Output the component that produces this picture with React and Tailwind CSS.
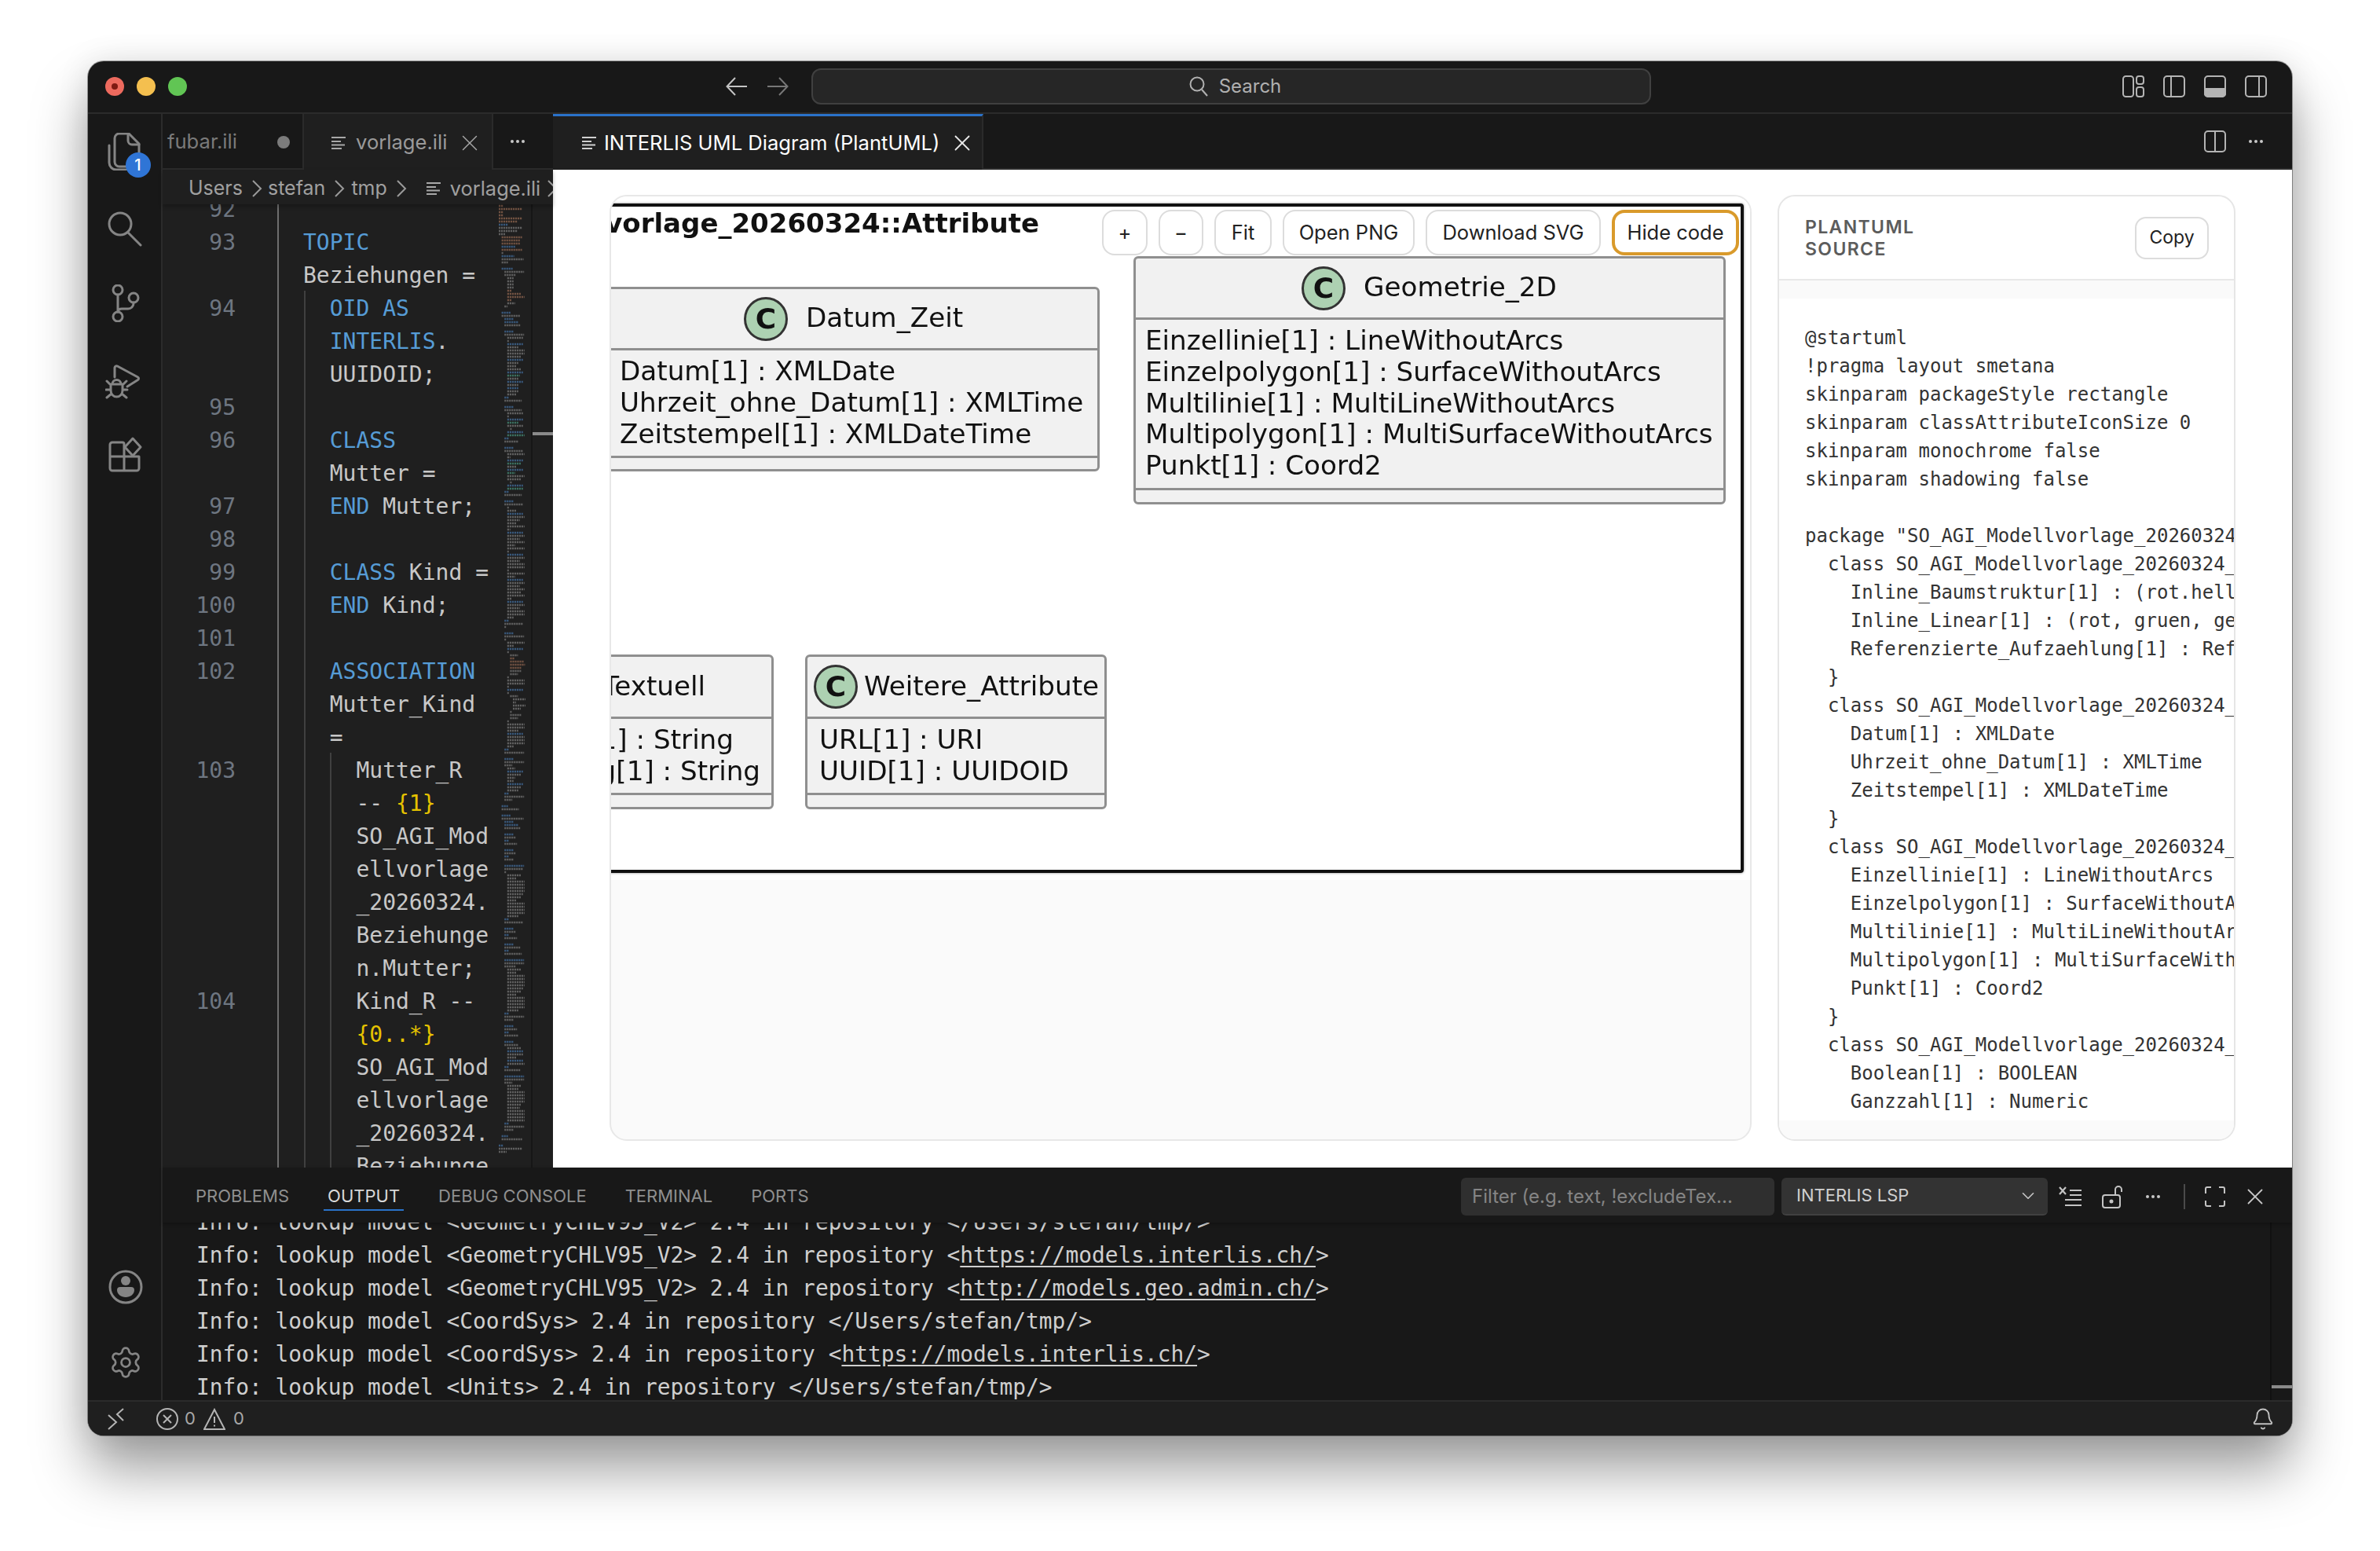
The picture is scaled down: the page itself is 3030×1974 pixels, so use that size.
import React from "react";
import { Settings, Bell, X, ChevronDown } from "lucide-react";

const MA = "3b20";
const GEO = "3g24 3g16";
// one token per minimap row: indent level, colour, width in px ("-" is an empty row)
const minimapRows = `0o6 0o30 0o6 0o6 0o30 0o24 0b12 0g30 0g24 0g8 1o26 1o24 1o24 1b18 1o26 1g2 1b16 1g30 1g8 - 1b14 2g28 2g14 3g8 3g8 3g8 3g8 3o6 3o18 3o30 3o6 3g10 2g4 -
1b12 1g24 2b12 2b18 2g20 - 2b12 2g26 3g20 3g2 ${MA} 3g14 3g22 3g22 3g18 ${MA} 3g14 3g12 3g18 ${MA} 3t16 3g14 ${MA} 3g14 3b14 3g14 3g12 2b6 2g22 - 2b12 2g22 3g20 3g2 ${MA} 3t14 3g20 4g2 ${MA} 3t22 2b6 2g18 -
2b12 2g24 3g22 3g4 ${MA} 3t18 3g12 ${MA} 3t10 3g22 3g18 4g2 ${MA} 3t20 2b6 2g22 - 2b12 2g24 3g2 3g12 ${MA} ${GEO} 3g12 3g22 3g4 ${MA} ${GEO} 3g24 3g10 3g22 3g2 ${MA} ${GEO} 3g24 3g22 3g2 3g22 3g10 ${MA} ${GEO} 3g24 3g18 3g22 3g6 ${MA} ${GEO} 3g24 3g24 3g8 2b6 2g24 2g2 -
2b12 2g26 2g2 3g22 3g8 ${MA} 3g2 4g10 4o6 4o18 4o24 4o14 4g14 4g10 3g2 3g22 3g22 3g2 ${MA} 3g2 4g10 5g16 5g4 5g16 5g10 4g2 4g14 4g10 3g2 3g22 3g22 3g14 ${MA} 3g24 3g22 3g24 3g8 2b6 2g28 -
2b12 2g26 2g10 3g10 ${MA} 3g18 3g10 3g8 ${MA} 3g18 3g14 2b6 2g26 2g10 - 1b8 1g22 - 1b12 1g28 2b12 2b18 2g20 - 2b12 2g14 2b6 2g16 - 2b12 2g14 2b6 2g12 - 2b26 2g24 2g2 3g18 3g12 3g24 3g24 3g24 3g26 3g20 3g18 3g12 3g24 3g24 3g24 3g26 3g14 2b6 2g24 - 2b12 2g14 2b6 2g16 - 2b12 2g20 2b6 2g22 - 2b26 2g28 2g14 3g18 3g12 3g24 3g24 3g24 3g26 3g20 3g18 3g12 3g24 3g24 3g24 3g26 3g14 2b6 2g28 2g12 -
2b12 2g16 2b6 2g18 - 2b12 2g18 3g18 ${MA} 3g20 3g12 ${MA} 3g22 2b6 2g20 - 2b26 2g28 2g10 3g18 3g14 3g24 3g24 3g24 3g26 3g18 3g16 3g24 3g24 3g24 3g22 2b6 2g28 2g12 - 1b8 1g26 - 0b6 0g30 0g10 -`
  .split(/\s+/);

const minimapColors = { b: "#4a7fb8", g: "#8b8b8b", o: "#a8755a", t: "#4fa58a" };

const codeRows = [
  [92],
  [93, [["b", "TOPIC"]]],
  [null, [["", "Beziehungen ="]]],
  [94, [["b", "  OID AS"]]],
  [null, [["b", "  INTERLIS"], ["", "."]]],
  [null, [["", "  UUIDOID;"]]],
  [95],
  [96, [["b", "  CLASS"]]],
  [null, [["", "  Mutter ="]]],
  [97, [["b", "  END"], ["", " Mutter;"]]],
  [98],
  [99, [["b", "  CLASS"], ["", " Kind ="]]],
  [100, [["b", "  END"], ["", " Kind;"]]],
  [101],
  [102, [["b", "  ASSOCIATION"]]],
  [null, [["", "  Mutter_Kind"]]],
  [null, [["", "  ="]]],
  [103, [["", "    Mutter_R"]]],
  [null, [["", "    -- "], ["y", "{1}"]]],
  [null, [["", "    SO_AGI_Mod"]]],
  [null, [["", "    ellvorlage"]]],
  [null, [["", "    _20260324."]]],
  [null, [["", "    Beziehunge"]]],
  [null, [["", "    n.Mutter;"]]],
  [104, [["", "    Kind_R --"]]],
  [null, [["y", "    {0..*}"]]],
  [null, [["", "    SO_AGI_Mod"]]],
  [null, [["", "    ellvorlage"]]],
  [null, [["", "    _20260324."]]],
  [null, [["", "    Beziehunge"]]],
];

const sourceLines = [
  "@startuml",
  "!pragma layout smetana",
  "skinparam packageStyle rectangle",
  "skinparam classAttributeIconSize 0",
  "skinparam monochrome false",
  "skinparam shadowing false",
  "",
  'package "SO_AGI_Modellvorlage_20260324::Attribute" as SO_AGI {',
  "  class SO_AGI_Modellvorlage_20260324_Attribute_Aufzaehlung {",
  "    Inline_Baumstruktur[1] : (rot.hellrot, rot.dunkelrot, gruen, gelb)",
  "    Inline_Linear[1] : (rot, gruen, gelb)",
  "    Referenzierte_Aufzaehlung[1] : Referenziert_Typ",
  "  }",
  "  class SO_AGI_Modellvorlage_20260324_Attribute_Datum_Zeit {",
  "    Datum[1] : XMLDate",
  "    Uhrzeit_ohne_Datum[1] : XMLTime",
  "    Zeitstempel[1] : XMLDateTime",
  "  }",
  "  class SO_AGI_Modellvorlage_20260324_Attribute_Geometrie_2D {",
  "    Einzellinie[1] : LineWithoutArcs",
  "    Einzelpolygon[1] : SurfaceWithoutArcs",
  "    Multilinie[1] : MultiLineWithoutArcs",
  "    Multipolygon[1] : MultiSurfaceWithoutArcs",
  "    Punkt[1] : Coord2",
  "  }",
  "  class SO_AGI_Modellvorlage_20260324_Attribute_Numerisch {",
  "    Boolean[1] : BOOLEAN",
  "    Ganzzahl[1] : Numeric",
  "    Zahl[1] : Numeric",
];

const outputRows = [
  ["Info: lookup model <GeometryCHLV95_V2> 2.4 in repository </Users/stefan/tmp/>"],
  ["Info: lookup model <GeometryCHLV95_V2> 2.4 in repository <", "https://models.interlis.ch/", ">"],
  ["Info: lookup model <GeometryCHLV95_V2> 2.4 in repository <", "http://models.geo.admin.ch/", ">"],
  ["Info: lookup model <CoordSys> 2.4 in repository </Users/stefan/tmp/>"],
  ["Info: lookup model <CoordSys> 2.4 in repository <", "https://models.interlis.ch/", ">"],
  ["Info: lookup model <Units> 2.4 in repository </Users/stefan/tmp/>"],
];

function FileLines({ color = "#a8a8a8" }) {
  return (
    <svg width="18" height="16" viewBox="0 0 18 16" fill="none" stroke={color} strokeWidth="2">
      <path d="M0 1h18M0 6h12M0 10.5h17M0 15h13" />
    </svg>
  );
}

function Crumb() {
  return (
    <svg width="14" height="22" viewBox="0 0 14 22" fill="none" stroke="#9a9a9a" strokeWidth="2" className="shrink-0">
      <path d="M2 1l10 10L2 21" />
    </svg>
  );
}

function Dots({ color = "#c8c8c8" }) {
  return (
    <svg width="20" height="6" viewBox="0 0 20 6" fill={color}>
      <circle cx="3" cy="3" r="2" />
      <circle cx="10" cy="3" r="2" />
      <circle cx="17" cy="3" r="2" />
    </svg>
  );
}

function ActivityIcon({ children, className }) {
  return (
    <svg
      width="48"
      height="48"
      viewBox="0 0 48 48"
      fill="none"
      stroke="#858585"
      strokeWidth="3"
      strokeLinecap="round"
      strokeLinejoin="round"
      className={className}
    >
      {children}
    </svg>
  );
}

function TitleIcon({ children }) {
  return (
    <svg width="28" height="28" viewBox="0 0 28 28" fill="none" stroke="#b4b4b4" strokeWidth="2">
      {children}
    </svg>
  );
}

function UmlBox({ className, headClass, titleClass, bodyClass, title, circle = true, attrs }) {
  return (
    <div className={`absolute flex flex-col rounded-[6px] border-[3px] border-[#8f8f8f] bg-[#f1f1f1] font-['DejaVu_Sans',sans-serif] text-[#111] blur-[0.5px] ${className}`}>
      <div className={`flex items-center border-b-[3px] border-[#8f8f8f] ${headClass}`}>
        {circle && (
          <span className="flex h-[56px] w-[56px] shrink-0 items-center justify-center rounded-full border-[3px] border-[#333] bg-[#add1b2] text-[36px] font-bold leading-none">
            C
          </span>
        )}
        <span className={`whitespace-nowrap pb-[2px] text-[34.2px] leading-none ${titleClass}`}>{title}</span>
      </div>
      <div className={`border-b-[3px] border-[#8f8f8f] ${bodyClass}`}>{attrs}</div>
    </div>
  );
}

function Attr({ children, className = "" }) {
  return <div className={`h-[39.8px] whitespace-nowrap text-[34.2px] leading-[39.8px] ${className}`}>{children}</div>;
}

function DiagramButton({ children, className }) {
  return (
    <button className={`flex h-[58px] items-center justify-center rounded-[16px] bg-white text-[25.5px] text-[#222] ${className}`}>
      {children}
    </button>
  );
}

export default function App() {
  return (
    <div className="h-[1974px] w-[3030px] overflow-hidden bg-white pl-[112px] pt-[78px] font-['Inter',sans-serif]">
      <div className="flex h-[1749px] w-[2806px] flex-col overflow-hidden rounded-[20px] bg-[#181818] shadow-[0_0_0_1px_rgba(0,0,0,0.35),0_44px_70px_rgba(0,0,0,0.38),0_0_40px_rgba(0,0,0,0.1)]">
        {/* Title bar */}
        <div className="flex h-[67px] shrink-0 items-center border-b-2 border-[#2b2b2b] pb-[2px]">
          <div className="ml-[22px] flex gap-[16px]">
            <span className="flex h-[24px] w-[24px] items-center justify-center rounded-full bg-[#ed6a5e]">
              <span className="h-[8px] w-[8px] rounded-full bg-[#7e1a12]" />
            </span>
            <span className="h-[24px] w-[24px] rounded-full bg-[#f4bf4f]" />
            <span className="h-[24px] w-[24px] rounded-full bg-[#61c554]" />
          </div>
          <svg width="28" height="24" viewBox="0 0 28 24" fill="none" stroke="#c4c4c4" strokeWidth="2" className="ml-[686px]">
            <path d="M27 12H2M12 1L1.5 12L12 23" />
          </svg>
          <svg width="28" height="24" viewBox="0 0 28 24" fill="none" stroke="#777" strokeWidth="2" className="ml-[24px]">
            <path d="M1 12h25M16 1l10.5 11L16 23" />
          </svg>
          <div className="ml-[29px] flex h-[46px] w-[1069px] items-center justify-center gap-[14px] rounded-[12px] border-2 border-[#404040] bg-[#262626] pl-[10px] text-[24px] text-[#b0b0b0]">
            <svg width="24" height="26" viewBox="0 0 24 26" fill="none" stroke="#b0b0b0" strokeWidth="2">
              <ellipse cx="10" cy="10" rx="8.5" ry="8.5" />
              <path d="M16 17l7 8" />
            </svg>
            Search
          </div>
          <div className="ml-[600px] flex gap-[24px]">
            <TitleIcon>
              <rect x="1" y="1" width="13" height="26" rx="3.5" />
              <rect x="18" y="1" width="9" height="10" rx="3" />
              <rect x="18" y="15" width="9" height="12" rx="3" />
            </TitleIcon>
            <TitleIcon>
              <rect x="1" y="1" width="26" height="26" rx="4" />
              <path d="M10 1v26" />
            </TitleIcon>
            <TitleIcon>
              <rect x="1" y="1" width="26" height="26" rx="4" />
              <path d="M1 17h26v6a4 4 0 0 1-4 4H5a4 4 0 0 1-4-4z" fill="#b4b4b4" />
            </TitleIcon>
            <TitleIcon>
              <rect x="1" y="1" width="26" height="26" rx="4" />
              <path d="M18 1v26" />
            </TitleIcon>
          </div>
        </div>

        <div className="flex min-h-0 flex-1">
          {/* Activity bar */}
          <div className="flex w-[95px] shrink-0 flex-col items-center border-r-2 border-[#2b2b2b] pr-[2px] pt-[24px]">
            <div className="relative h-[48px] w-[48px]">
              <ActivityIcon>
                <path d="M12 7a6 6 0 0 1 6-6h12l13 13v23a6 6 0 0 1-6 6H18a6 6 0 0 1-6-6z" />
                <path d="M29 1v9a5 5 0 0 0 5 5h9" />
                <path d="M5 16v22a9 9 0 0 0 9 9h18" />
              </ActivityIcon>
              <span className="absolute left-[26px] top-[25px] flex h-[32px] w-[32px] items-center justify-center rounded-full bg-[#2f75d6] text-[20px] font-medium text-white">
                1
              </span>
            </div>
            <ActivityIcon className="mt-[49px]">
              <circle cx="19" cy="19" r="14" />
              <path d="M29 30l16 16" />
            </ActivityIcon>
            <ActivityIcon className="mt-[48px]">
              <circle cx="16" cy="7" r="6" />
              <circle cx="16" cy="41" r="6" />
              <circle cx="36" cy="17" r="6" />
              <path d="M16 13v22M36 23v1a7 7 0 0 1-7 7h-8a5 5 0 0 0-5 4" />
            </ActivityIcon>
            <ActivityIcon className="mt-[51px]">
              <path d="M12 19V7a2.5 2.5 0 0 1 3.5-2L41.5 19a2 2 0 0 1 0 3.5L28 31" />
              <path d="M9 28a5.500 5.500 0 0 1 11 0M7 28h15v8a7.500 8 0 0 1-15 0zM2 24l5 5M27 24l-5 5M1 35h6M28 35h-6M2 45l6-5M27 45l-6-5" />
            </ActivityIcon>
            <ActivityIcon className="mt-[46px]">
              <path d="M24 26V10a2 2 0 0 0-2-2H9a3 3 0 0 0-3 3v30a3 3 0 0 0 3 3h31a3 3 0 0 0 3-3V26H6M24 26v18" />
              <path d="M35 3l10 11-10 11-10-11z" />
            </ActivityIcon>
            <svg width="44" height="44" viewBox="0 0 44 44" fill="none" className="ml-[4px] mt-auto">
              <circle cx="22" cy="22" r="20" stroke="#858585" strokeWidth="3" />
              <circle cx="22" cy="14" r="6" fill="#858585" />
              <path d="M11 26a4 4 0 0 1 4-4h14a4 4 0 0 1 4 4c0 5-5 9-11 9s-11-4-11-9z" fill="#858585" />
            </svg>
            <Settings size={44} strokeWidth={1.5} color="#858585" className="mb-[26px] ml-[4px] mt-[52px]" />
          </div>

          <div className="flex min-w-0 flex-1 flex-col">
            <div className="flex min-h-0 flex-1">
              {/* Left editor group */}
              <div className="flex w-[497px] shrink-0 flex-col bg-[#1f1f1f]">
                <div className="flex h-[71px] shrink-0 text-[25.6px]">
                  <div className="flex w-[180px] items-center border-b-2 border-r-2 border-[#2b2b2b] bg-[#181818] pl-[6px] pt-[2px] text-[#7a7a7a]">
                    fubar.ili
                    <span className="ml-[51px] h-[16px] w-[16px] rounded-full bg-[#7c7c7c]" />
                  </div>
                  <div className="flex w-[239px] items-center bg-[#1f1f1f] pl-[35px] pt-[2px] text-[#9a9a9a]">
                    <FileLines />
                    <span className="ml-[13px]">vorlage.ili</span>
                    <X size={34} strokeWidth={1} color="#a8a8a8" className="ml-[12px] shrink-0" />
                  </div>
                  <div className="flex w-[78px] items-center justify-center border-b-2 border-l-2 border-[#2b2b2b] bg-[#181818] pr-[14px]">
                    <Dots />
                  </div>
                </div>
                <div className="relative z-10 flex h-[44px] shrink-0 items-center overflow-hidden whitespace-nowrap bg-[#1f1f1f] pl-[33px] pt-[4px] text-[25px] text-[#a0a0a0] shadow-[0_3px_5px_rgba(0,0,0,0.25)]">
                  <span>Users</span>
                  <span className="ml-[11px]"><Crumb /></span>
                  <span className="ml-[7px]">stefan</span>
                  <span className="ml-[11px]"><Crumb /></span>
                  <span className="ml-[8px]">tmp</span>
                  <span className="ml-[11px]"><Crumb /></span>
                  <span className="ml-[25px]"><FileLines /></span>
                  <span className="ml-[12px] text-[25.4px]">vorlage.ili</span>
                  <span className="ml-[8px]"><Crumb /></span>
                </div>
                <div className="flex min-h-0 flex-1">
                  <div className="relative w-[419px] shrink-0 overflow-hidden">
                    <div className="-mt-[14px] font-['DejaVu_Sans_Mono',monospace] text-[28px] text-[#c8c8c8]">
                      {codeRows.map(([num, spans], i) => (
                        <div key={i} className="flex h-[42px] leading-[42px]">
                          <span className="w-[93px] shrink-0 text-right text-[#6e7681]">{num}</span>
                          <span className="ml-[86px] whitespace-pre">
                            {(spans || []).map(([c, t], j) => (
                              <span key={j} className={c === "b" ? "text-[#569cd6]" : c === "y" ? "text-[#e6c300]" : ""}>
                                {t}
                              </span>
                            ))}
                          </span>
                        </div>
                      ))}
                    </div>
                    {/* indent guides */}
                    <span className="absolute bottom-0 left-[146px] top-0 w-[2px] bg-[#6e6e6e]" />
                    <span className="absolute bottom-0 left-[180px] top-[110px] w-[2px] bg-[#404040]" />
                    <span className="absolute bottom-0 left-[213px] top-[698px] w-[2px] bg-[#404040]" />
                  </div>
                  <div className="w-[50px] shrink-0 overflow-hidden">
                    <svg width="50" height="1226" viewBox="0 0 50 1226">
                      {minimapRows.map((t, i) => {
                        if (t === "-") return null;
                        const lvl = Number(t[0]);
                        const x = 9 + lvl * 3.6;
                        const len = Math.min(Number(t.slice(2)), 31 - lvl * 3);
                        return (
                          <line key={i} x1={x} x2={x + len} y1={i * 4 + 2} y2={i * 4 + 2} strokeWidth="2.4" strokeDasharray="2.2 0.8" stroke={minimapColors[t[1]]} opacity="0.6" />
                        );
                      })}
                    </svg>
                  </div>
                  <div className="w-[28px] shrink-0 border-l-2 border-[#161616]">
                    <div className="mt-[290px] h-[4px] bg-[#8a8a8a]" />
                  </div>
                </div>
              </div>

              {/* Right editor group */}
              <div className="flex min-w-0 flex-1 flex-col bg-white">
                <div className="flex h-[71px] shrink-0 bg-[#181818]">
                  <div className="flex w-[548px] items-center border-r-2 border-t-[3px] border-r-[#2b2b2b] border-t-[#2a72c9] bg-[#1f1f1f] pl-[37px] text-[25.6px] text-white">
                    <FileLines color="#d0d0d0" />
                    <span className="ml-[10px] whitespace-nowrap">INTERLIS UML Diagram (PlantUML)</span>
                    <X size={34} strokeWidth={1.25} color="#e8e8e8" className="ml-[12px] shrink-0" />
                  </div>
                  <div className="flex flex-1 items-center justify-end gap-[28px] border-b-2 border-[#2b2b2b] pr-[36px]">
                    <TitleIcon>
                      <rect x="1" y="1" width="26" height="26" rx="4" />
                      <path d="M14 1v26" />
                    </TitleIcon>
                    <Dots />
                  </div>
                </div>
                <div className="flex min-h-0 flex-1 gap-[33px] px-[72px] pb-[34px] pt-[32px]">
                  {/* Diagram card */}
                  <div className="min-w-0 flex-1 overflow-hidden rounded-[22px] border-2 border-[#e8e8e8] bg-[#fafafa]">
                    <div className="relative h-[870px] overflow-hidden bg-white">
                      <div className="absolute left-[-100px] top-[9px] h-[852px] w-[1542px] rounded-[4px] border-4 border-[#111] shadow-[0_0_3px_rgba(0,0,0,0.5)]" />
                      <div className="absolute right-[905px] top-[14px] whitespace-nowrap font-['DejaVu_Sans',sans-serif] text-[34px] font-bold leading-[40px] text-[#111] blur-[0.5px]">
                        SO_AGI_Modellvorlage_20260324::Attribute
                      </div>
                      <UmlBox
                        className="left-[-100px] top-[115px] h-[235px] w-[722px]"
                        headClass="h-[78px] pl-[266px]"
                        titleClass="ml-[23px]"
                        bodyClass="h-[137px] pl-[108px] pt-[7px]"
                        title="Datum_Zeit"
                        attrs={
                          <>
                            <Attr>Datum[1] : XMLDate</Attr>
                            <Attr>Uhrzeit_ohne_Datum[1] : XMLTime</Attr>
                            <Attr>Zeitstempel[1] : XMLDateTime</Attr>
                          </>
                        }
                      />
                      <UmlBox
                        className="left-[665px] top-[76px] h-[316px] w-[754px]"
                        headClass="h-[78px] pl-[211px]"
                        titleClass="ml-[23px]"
                        bodyClass="h-[217px] pl-[12px] pt-[7px]"
                        title="Geometrie_2D"
                        attrs={
                          <>
                            <Attr>Einzellinie[1] : LineWithoutArcs</Attr>
                            <Attr>Einzelpolygon[1] : SurfaceWithoutArcs</Attr>
                            <Attr>Multilinie[1] : MultiLineWithoutArcs</Attr>
                            <Attr>Multipolygon[1] : MultiSurfaceWithoutArcs</Attr>
                            <Attr>Punkt[1] : Coord2</Attr>
                          </>
                        }
                      />
                      <UmlBox
                        className="left-[-200px] top-[583px] h-[197px] w-[407px]"
                        headClass="h-[79px] justify-end pr-[84px]"
                        bodyClass="h-[97px] pt-[7px] text-right"
                        title="Textuell"
                        circle={false}
                        attrs={
                          <>
                            <Attr className="pr-[48px]">Einzeilig[1] : String</Attr>
                            <Attr className="pr-[14px]">Mehrzeilig[1] : String</Attr>
                          </>
                        }
                      />
                      <UmlBox
                        className="left-[247px] top-[583px] h-[197px] w-[384px]"
                        headClass="h-[79px] pl-[8px]"
                        titleClass="ml-[8px]"
                        bodyClass="h-[97px] pl-[15px] pt-[7px]"
                        title="Weitere_Attribute"
                        attrs={
                          <>
                            <Attr>URL[1] : URI</Attr>
                            <Attr>UUID[1] : UUIDOID</Attr>
                          </>
                        }
                      />
                      {/* toolbar floating over the diagram */}
                      <div className="absolute left-[625px] top-[17px] flex gap-[14px]">
                        <DiagramButton className="w-[58px] border-2 border-[#dcdcdc]">+</DiagramButton>
                        <DiagramButton className="w-[57px] border-2 border-[#dcdcdc]">−</DiagramButton>
                        <DiagramButton className="w-[73px] border-2 border-[#dcdcdc]">Fit</DiagramButton>
                        <DiagramButton className="w-[168px] border-2 border-[#dcdcdc]">Open PNG</DiagramButton>
                        <DiagramButton className="w-[223px] border-2 border-[#dcdcdc]">Download SVG</DiagramButton>
                        <DiagramButton className="w-[162px] border-[4px] border-[#d99a2b]">Hide code</DiagramButton>
                      </div>
                    </div>
                  </div>

                  {/* PlantUML source card */}
                  <div className="flex w-[583px] shrink-0 flex-col overflow-hidden rounded-[22px] border-2 border-[#e6e6e6] bg-white">
                    <div className="flex h-[107px] shrink-0 items-center justify-between border-b-2 border-[#e8e8e8] pl-[33px] pr-[32px]">
                      <div className="text-[23px] font-semibold leading-[28px] tracking-[0.06em] text-[#5c5c5c]">
                        PLANTUML
                        <br />
                        SOURCE
                      </div>
                      <button className="h-[54px] w-[94px] rounded-[14px] border-2 border-[#dcdcdc] bg-white text-[23px] text-[#222]">Copy</button>
                    </div>
                    <div className="h-[23px] shrink-0 bg-[#fafafa]" />
                    <div className="min-h-0 flex-1 overflow-hidden pl-[33px] pt-[32px] font-['DejaVu_Sans_Mono',monospace] text-[24px] leading-[36px] text-[#333]">
                      {sourceLines.map((l, i) => (
                        <div key={i} className="h-[36px] whitespace-pre">
                          {l}
                        </div>
                      ))}
                    </div>
                    <div className="h-[24px] shrink-0 bg-[#fafafa]" />
                  </div>
                </div>
              </div>
            </div>

            {/* Bottom panel */}
            <div className="flex h-[296px] shrink-0 flex-col">
              <div className="relative z-10 flex h-[70px] shrink-0 items-center bg-[#181818] pl-[42px] pt-[3px] shadow-[0_2px_4px_rgba(0,0,0,0.25)]">
                <div className="flex gap-[49px] text-[22px] text-[#8f8f8f]">
                  <span>PROBLEMS</span>
                  <span className="relative text-[#d8d8d8]">
                    OUTPUT
                    <span className="absolute -left-[5px] -right-[5px] top-[33px] h-[2px] bg-[#2a72c9]" />
                  </span>
                  <span>DEBUG CONSOLE</span>
                  <span>TERMINAL</span>
                  <span>PORTS</span>
                </div>
                <div className="ml-auto flex h-[48px] w-[399px] items-center rounded-[6px] bg-[#2f2f2f] pl-[14px] text-[24px] text-[#858585]">
                  Filter (e.g. text, !excludeTex...
                </div>
                <div className="ml-[9px] flex h-[48px] w-[339px] items-center justify-between rounded-[6px] border-b-2 border-[#414141] bg-[#333] pl-[19px] pr-[12px] text-[22px] text-[#d0d0d0]">
                  INTERLIS LSP
                  <ChevronDown size={26} strokeWidth={1.5} color="#c8c8c8" />
                </div>
                <svg width="30" height="26" viewBox="0 0 30 26" fill="none" stroke="#c4c4c4" strokeWidth="2.2" className="ml-[14px]">
                  <path d="M1 1l8 9M9 1l-8 9M14 5h15M14 11h15M8 17h21M8 24h21" />
                </svg>
                <svg width="26" height="30" viewBox="0 0 26 30" fill="none" stroke="#c4c4c4" strokeWidth="2" className="ml-[25px]">
                  <rect x="1" y="13" width="22" height="16" rx="3" />
                  <path d="M17 13V6a4 4 0 0 1 8 0v3" />
                  <circle cx="12" cy="21" r="1.500" fill="#c4c4c4" />
                </svg>
                <span className="ml-[29px]"><Dots /></span>
                <span className="ml-[29px] h-[32px] w-[2px] bg-[#4a4a4a]" />
                <svg width="26" height="26" viewBox="0 0 26 26" fill="none" stroke="#c4c4c4" strokeWidth="2" className="ml-[25px]">
                  <path d="M1 9V3a2 2 0 0 1 2-2h5M18 1h5a2 2 0 0 1 2 2v6M25 18v5a2 2 0 0 1-2 2h-5M8 25H3a2 2 0 0 1-2-2v-5" />
                </svg>
                <X size={34} strokeWidth={1.25} color="#c8c8c8" className="ml-[21px] mr-[30px] shrink-0" />
              </div>
              <div className="flex min-h-0 flex-1 bg-[#181818]">
                <div className="min-w-0 flex-1 overflow-hidden pl-[43px]">
                  <div className="-mt-[21px] font-['DejaVu_Sans_Mono',monospace] text-[27.85px] leading-[42px] text-[#cfcfcf]">
                    {outputRows.map(([a, link, b], i) => (
                      <div key={i} className="h-[42px] whitespace-pre">
                        {a}
                        {link && <span className="underline underline-offset-4">{link}</span>}
                        {b}
                      </div>
                    ))}
                  </div>
                </div>
                <div className="w-[28px] shrink-0 border-l-2 border-[#111]">
                  <div className="mt-[207px] h-[4px] bg-[#8a8a8a]" />
                </div>
              </div>
            </div>
          </div>
        </div>

        {/* Status bar */}
        <div className="flex h-[45px] shrink-0 items-center border-t-2 border-[#2b2b2b] bg-[#1f1f1f] text-[22px] text-[#a8a8a8]">
          <svg width="22" height="28" viewBox="0 0 22 28" fill="none" stroke="#b4b4b4" strokeWidth="2" className="ml-[25px]">
            <path d="M1 9l10 9-10 9M20 1l-8 7 8 8" />
          </svg>
          <svg width="28" height="28" viewBox="0 0 28 28" fill="none" stroke="#b4b4b4" strokeWidth="2" className="ml-[40px]">
            <circle cx="14" cy="14" r="13" />
            <path d="M9 9l10 10M19 9L9 19" />
          </svg>
          <span className="ml-[8px]">0</span>
          <svg width="28" height="28" viewBox="0 0 28 28" fill="none" stroke="#b4b4b4" strokeWidth="2" className="ml-[10px]">
            <path d="M14 2l13 25H1z" />
            <path d="M14 11v8M14 21.500v2" />
          </svg>
          <span className="ml-[10px]">0</span>
          <Bell size={30} strokeWidth={1.5} color="#c0c0c0" className="ml-auto mr-[22px]" />
        </div>
      </div>
    </div>
  );
}
